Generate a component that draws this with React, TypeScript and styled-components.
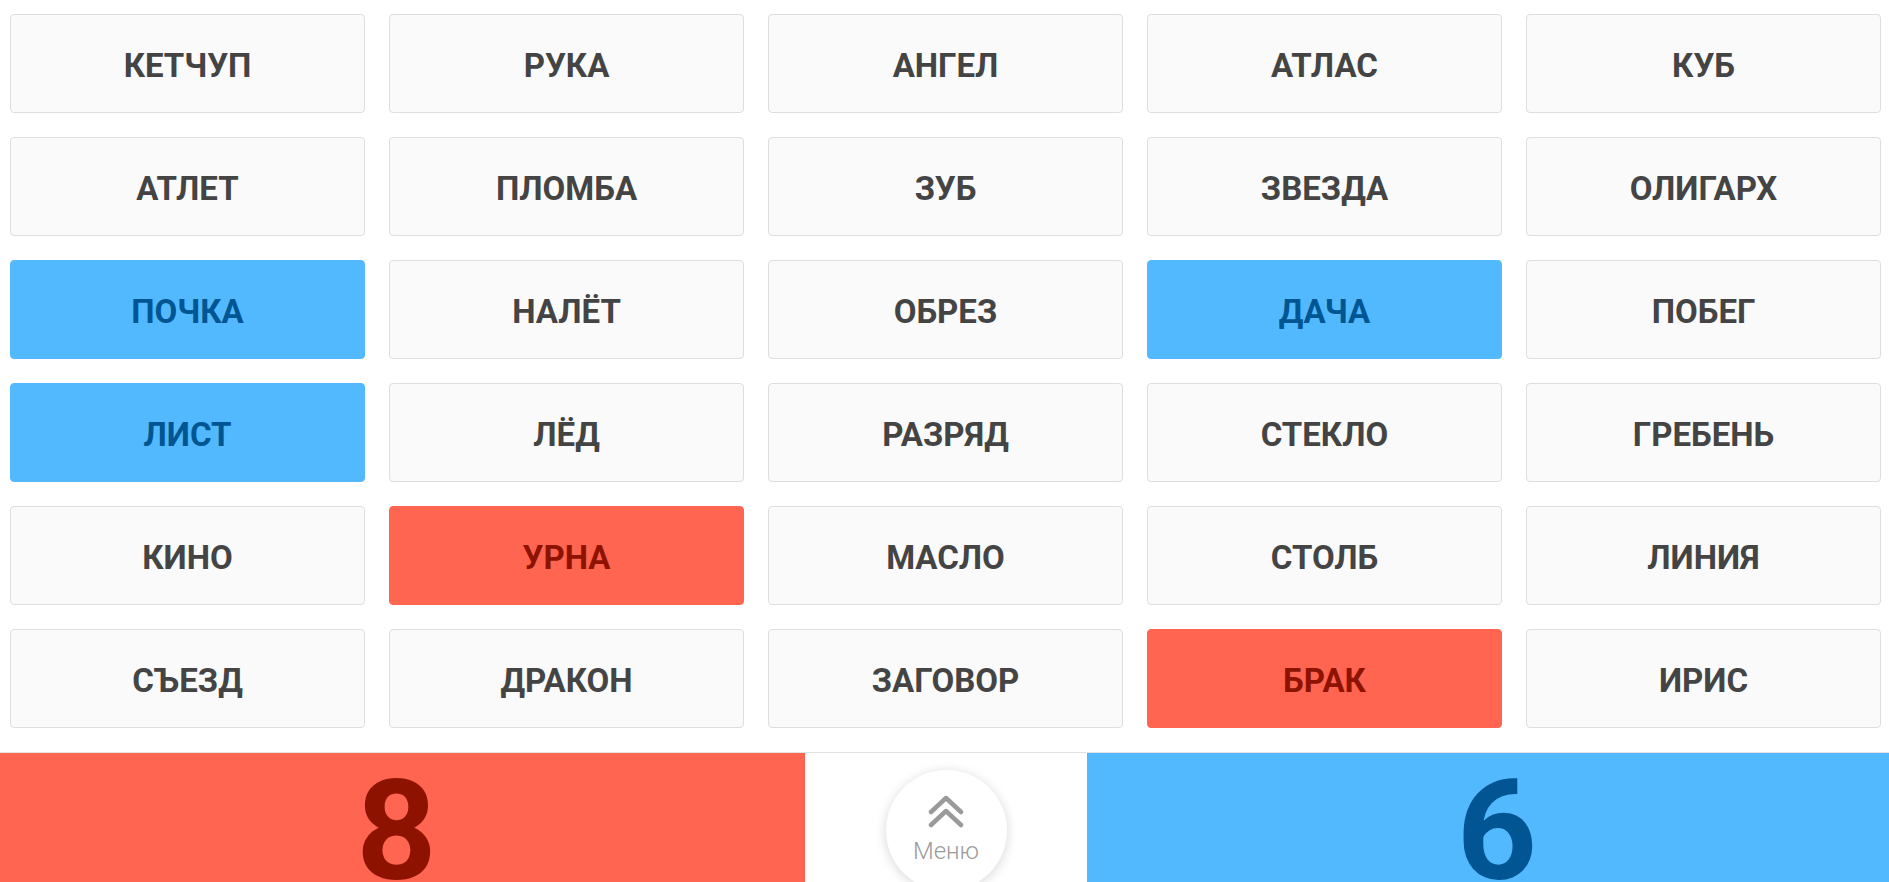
import React from "react";
import styled, { createGlobalStyle, css } from "styled-components";

const Global = createGlobalStyle`
  html, body {
    margin: 0;
    padding: 0;
    background: #ffffff;
    overflow: hidden;
  }
  body {
    font-family: Roboto, "Noto Sans", sans-serif;
  }
`;

type Team = "none" | "blue" | "red";

const Page = styled.div`
  width: 1889px;
  height: 882px;
  display: flex;
  flex-direction: column;
`;

const Board = styled.div`
  display: grid;
  grid-template-columns: repeat(5, 355px);
  grid-auto-rows: 99px;
  column-gap: 24px;
  row-gap: 24px;
  padding: 14px 0 0 10px;
`;

const Card = styled.div<{ $team: Team }>`
  box-sizing: border-box;
  display: flex;
  align-items: center;
  justify-content: center;
  border-radius: 4px;
  font-family: Roboto, sans-serif;
  font-weight: 700;
  font-size: 33px;
  text-transform: uppercase;
  padding-top: 3px;
  ${(p) =>
    p.$team === "blue"
      ? css`
          background: #52b9ff;
          border: 1px solid #52b9ff;
          color: #005592;
        `
      : p.$team === "red"
      ? css`
          background: #ff6551;
          border: 1px solid #ff6551;
          color: #8e1200;
        `
      : css`
          background: #fafafa;
          border: 1px solid #dedede;
          color: #444444;
        `}
`;

const ScoreBar = styled.div`
  margin-top: 24px;
  flex: 1;
  display: grid;
  grid-template-columns: 805px 282px 1fr;
  border-top: 1px solid #e2e2e2;
  overflow: hidden;
`;

const Score = styled.div<{ $team: "red" | "blue" }>`
  display: flex;
  justify-content: center;
  align-items: flex-start;
  overflow: hidden;
  font-family: Roboto, sans-serif;
  font-weight: 700;
  font-size: 140px;
  line-height: 1;
  padding-top: 8px;
  background: ${(p) => (p.$team === "red" ? "#ff6551" : "#52b9ff")};
  color: ${(p) => (p.$team === "red" ? "#8e1200" : "#005592")};
`;

const ScoreNum = styled.span<{ $shift: number }>`
  display: block;
  transform: translateX(${(p) => p.$shift}px);
`;

const Middle = styled.div`
  display: flex;
  justify-content: center;
  align-items: flex-start;
  padding-top: 17px;
  background: #ffffff;
`;

const MenuButton = styled.button`
  width: 121px;
  height: 121px;
  border-radius: 50%;
  border: none;
  background: #ffffff;
  box-shadow: 0 2px 12px rgba(0, 0, 0, 0.16);
  display: flex;
  flex-direction: column;
  align-items: center;
  padding: 25px 0 0 0;
  cursor: pointer;
`;

const MenuLabel = styled.span`
  font-family: Roboto, sans-serif;
  font-weight: 300;
  font-size: 24px;
  color: #9a9a9a;
  margin-top: 11px;
  line-height: 1;
`;

const words: [string, Team][] = [
  ["Кетчуп", "none"],
  ["Рука", "none"],
  ["Ангел", "none"],
  ["Атлас", "none"],
  ["Куб", "none"],
  ["Атлет", "none"],
  ["Пломба", "none"],
  ["Зуб", "none"],
  ["Звезда", "none"],
  ["Олигарх", "none"],
  ["Почка", "blue"],
  ["Налёт", "none"],
  ["Обрез", "none"],
  ["Дача", "blue"],
  ["Побег", "none"],
  ["Лист", "blue"],
  ["Лёд", "none"],
  ["Разряд", "none"],
  ["Стекло", "none"],
  ["Гребень", "none"],
  ["Кино", "none"],
  ["Урна", "red"],
  ["Масло", "none"],
  ["Столб", "none"],
  ["Линия", "none"],
  ["Съезд", "none"],
  ["Дракон", "none"],
  ["Заговор", "none"],
  ["Брак", "red"],
  ["Ирис", "none"],
];

const Chevrons = () => (
  <svg width="36" height="33" viewBox="0 0 36 33" fill="none">
    <path
      d="M3 17 L18 3 L33 17"
      stroke="#9a9a9a"
      strokeWidth="4.5"
      strokeLinecap="round"
      strokeLinejoin="round"
    />
    <path
      d="M3 30 L18 16 L33 30"
      stroke="#9a9a9a"
      strokeWidth="4.5"
      strokeLinecap="round"
      strokeLinejoin="round"
    />
  </svg>
);

export default function App() {
  return (
    <>
      <Global />
      <Page>
        <Board>
          {words.map(([w, t]) => (
            <Card key={w} $team={t}>
              {w}
            </Card>
          ))}
        </Board>
        <ScoreBar>
          <Score $team="red">
            <ScoreNum $shift={-6}>8</ScoreNum>
          </Score>
          <Middle>
            <MenuButton>
              <Chevrons />
              <MenuLabel>Меню</MenuLabel>
            </MenuButton>
          </Middle>
          <Score $team="blue">
            <ScoreNum $shift={9}>6</ScoreNum>
          </Score>
        </ScoreBar>
      </Page>
    </>
  );
}
